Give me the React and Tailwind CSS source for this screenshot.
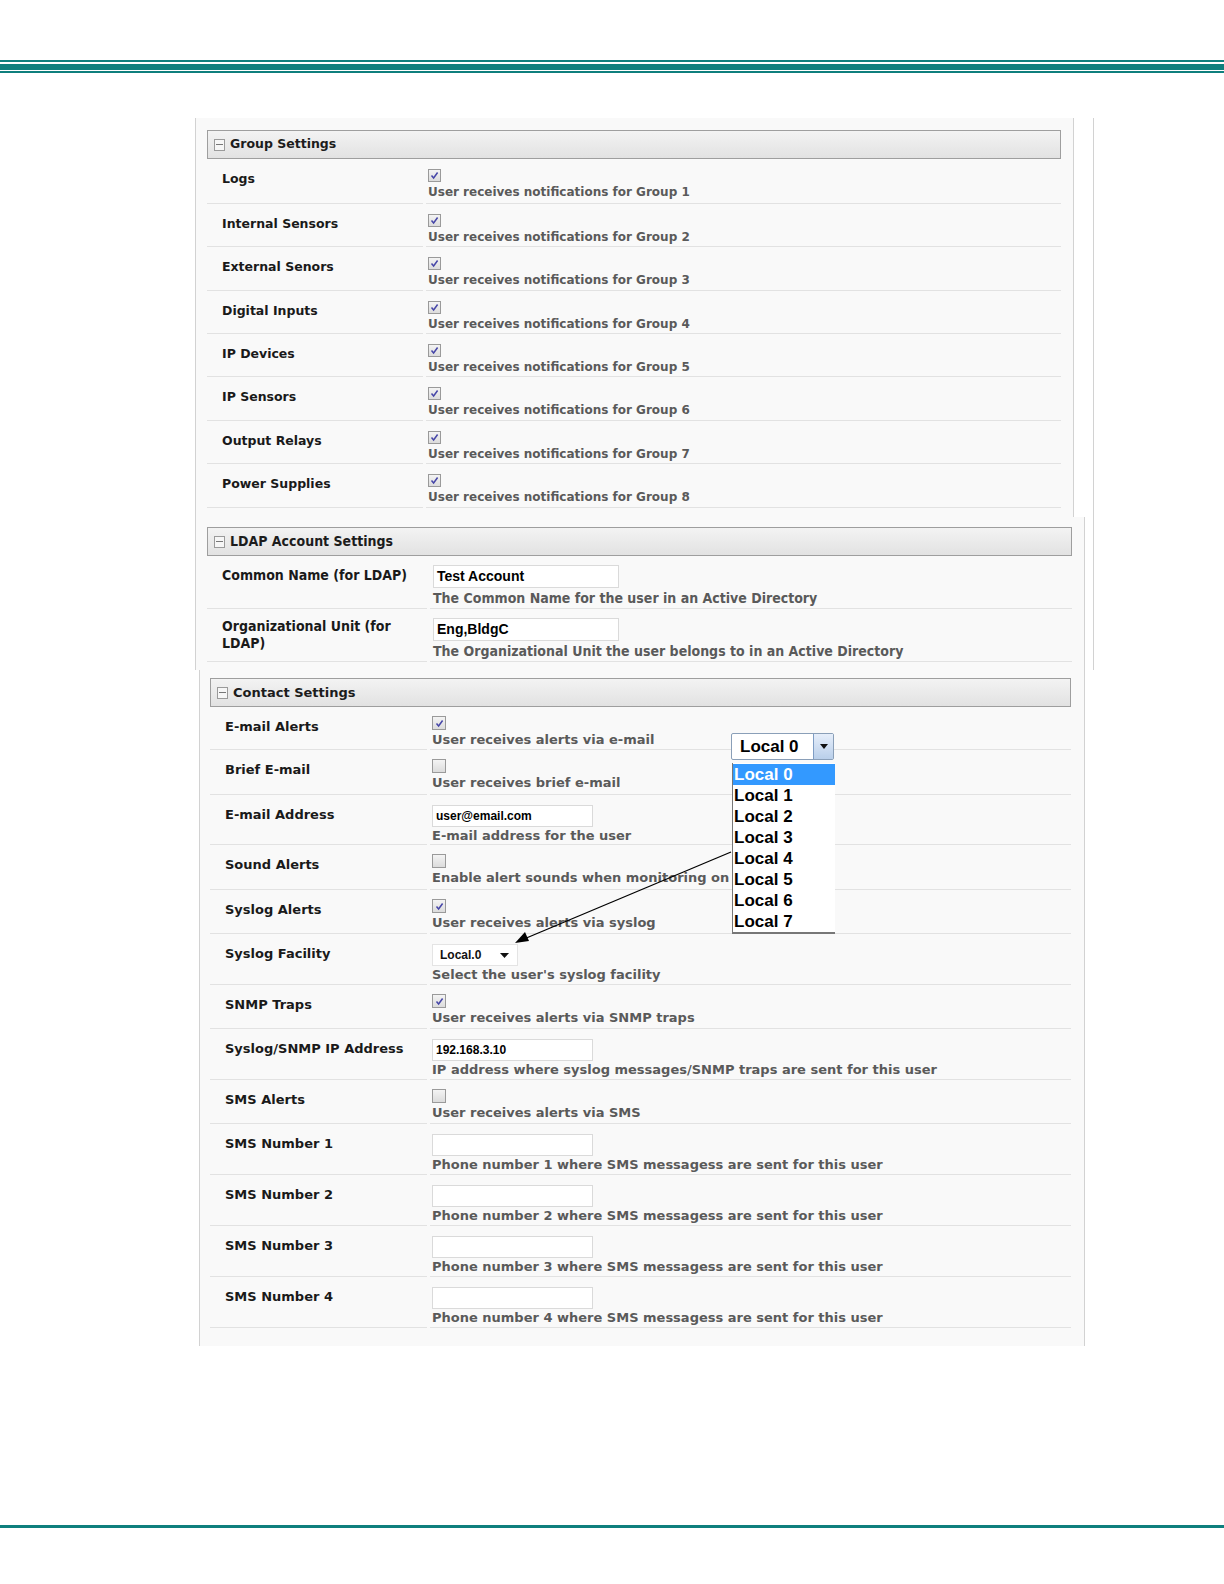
import React from "react";

const verdana = { fontFamily: '"DejaVu Sans", Verdana, sans-serif' };
const condensed = {
  fontFamily: '"DejaVu Sans Condensed", "DejaVu Sans", sans-serif',
  fontStretch: "condensed",
};
const arial = { fontFamily: '"Liberation Sans", Arial, sans-serif' };

const groupRows = [
  ["Logs", 1, 45],
  ["Internal Sensors", 2, 43],
  ["External Senors", 3, 44],
  ["Digital Inputs", 4, 43],
  ["IP Devices", 5, 43],
  ["IP Sensors", 6, 44],
  ["Output Relays", 7, 43],
  ["Power Supplies", 8, 44],
];

const Check = ({ checked, size = 13 }) => (
  <div
    className="border border-[#9a9a9a] bg-gradient-to-b from-[#f4f4f4] to-[#dcdcdc] flex items-center justify-center"
    style={{ width: size, height: size }}
  >
    {checked && (
      <svg width="9" height="9" viewBox="0 0 9 9">
        <path d="M1.5 4.5 L3.6 7 L7.6 1.5" fill="none" stroke="#4646a8" strokeWidth="1.5" />
      </svg>
    )}
  </div>
);

const Header = ({ title, size = "text-[13px]", font = verdana }) => (
  <div className="h-[29px] border border-[#9e9e9e] bg-gradient-to-b from-[#f3f3f3] to-[#e2e2e2] flex items-center pl-[6px]">
    <div className="w-[11px] h-[12px] border border-[#9a9a9a] bg-[#f6f6f6] flex items-center justify-center mr-[5px]">
      <div className="w-[7px] h-px bg-[#777]" />
    </div>
    <span className={`font-bold text-[#1c1c1c] ${size}`} style={font}>
      {title}
    </span>
  </div>
);

// one settings row: label cell + value cell, each with its own bottom rule
const Row = ({ label, h, children, labelW = 217, font = verdana, labelCls = "pt-[11px] text-[13px]" }) => (
  <div className="flex" style={{ height: h }}>
    <div
      className={`border-b border-[#e2e2e2] pl-[15px] font-bold text-[#1a1a1a] leading-[17px] ${labelCls}`}
      style={{ width: labelW, ...font }}
    >
      {label}
    </div>
    <div className="flex-1 ml-[3px] border-b border-[#e2e2e2] pl-[2px]">{children}</div>
  </div>
);

const Desc = ({ children, className = "", font = verdana }) => (
  <div className={`font-bold text-[#5a5a5a] leading-[16px] whitespace-nowrap ${className}`} style={font}>
    {children}
  </div>
);

const TextBox = ({ value, w = 161, h = 22, cls = "text-[12px]" }) => (
  <div
    className={`bg-white border border-[#dadada] flex items-center pl-[3px] font-bold text-black ${cls}`}
    style={{ width: w, height: h, ...arial }}
  >
    {value}
  </div>
);

const CheckRow = ({ label, h, checked, desc }) => (
  <Row label={label} h={h}>
    <div className="pt-[9px]">
      <Check checked={checked} size={14} />
      <Desc className="mt-[2px] text-[13px]">{desc}</Desc>
    </div>
  </Row>
);

const InputRow = ({ label, h, value, desc }) => (
  <Row label={label} h={h}>
    <div className="pt-[10px]">
      <TextBox value={value} />
      <Desc className="mt-px text-[13px]">{desc}</Desc>
    </div>
  </Row>
);

export default function App() {
  const locals = [0, 1, 2, 3, 4, 5, 6, 7];
  return (
    <div className="w-[1224px] h-[1584px] bg-white relative">
      {/* top double rule */}
      <div className="pt-[60px]">
        <div className="h-[2px] bg-[#0f7f7d]" />
        <div className="h-px mt-px" />
        <div className="h-[6px] bg-[#0f7f7d]" />
        <div className="h-px" />
        <div className="h-[2px] bg-[#0f7f7d]" />
      </div>

      <div className="mt-[45px] ml-[195px] w-[899px] border-r border-[#d2d2d2]">
        {/* Group Settings */}
        <div className="w-[879px] h-[399px] bg-[#f9f9f9] border-l border-r border-[#d2d2d2] pt-[12px] pl-[11px] pr-[12px]">
          <Header title="Group Settings" size="text-[12.5px]" />
          {groupRows.map(([label, n, h]) => (
            <Row key={n} label={label} h={h} labelW={216} labelCls="pt-[11px] text-[12.5px]">
              <div className="pt-[10px]">
                <Check checked />
                <Desc className="mt-[2px] text-[12px] leading-[15px]">User receives notifications for Group {n}</Desc>
              </div>
            </Row>
          ))}
        </div>

        {/* LDAP Account Settings */}
        <div className="w-[890px] h-[153px] bg-[#f9f9f9] border-l border-r border-[#d2d2d2] pt-[10px] pl-[11px] pr-[12px]">
          <Header title="LDAP Account Settings" size="text-[14px]" font={condensed} />
          <Row label="Common Name (for LDAP)" h={53} labelW={220} font={condensed} labelCls="pt-[11px] text-[14px]">
            <div className="pt-[9px] pl-px">
              <TextBox value="Test Account" w={186} h={23} cls="text-[14px]" />
              <Desc className="mt-px text-[14px] leading-[18px]" font={condensed}>
                The Common Name for the user in an Active Directory
              </Desc>
            </div>
          </Row>
          <Row label="Organizational Unit (for LDAP)" h={53} labelW={220} font={condensed} labelCls="pt-[9px] text-[14px] pr-[10px]">
            <div className="pt-[9px] pl-px">
              <TextBox value="Eng,BldgC" w={186} h={23} cls="text-[14px]" />
              <Desc className="mt-px text-[14px] leading-[18px]" font={condensed}>
                The Organizational Unit the user belongs to in an Active Directory
              </Desc>
            </div>
          </Row>
        </div>
      </div>

      {/* Contact Settings */}
      <div className="relative ml-[199px] w-[886px] h-[676px] bg-[#f9f9f9] border-l border-r border-[#d2d2d2] pt-[8px] pl-[10px] pr-[13px]">
        <Header title="Contact Settings" />
        <CheckRow label="E-mail Alerts" h={43} checked desc="User receives alerts via e-mail" />
        <CheckRow label="Brief E-mail" h={45} desc="User receives brief e-mail" />
        <InputRow label="E-mail Address" h={50} value="user@email.com" desc="E-mail address for the user" />
        <CheckRow label="Sound Alerts" h={45} desc="Enable alert sounds when monitoring on" />
        <CheckRow label="Syslog Alerts" h={44} checked desc="User receives alerts via syslog" />
        <Row label="Syslog Facility" h={51}>
          <div className="pt-[10px]">
            <div
              className="w-[86px] h-[22px] bg-white border border-[#e4e4e4] flex items-center justify-between pl-[7px] pr-[8px] text-[12px] font-bold text-[#111]"
              style={arial}
            >
              Local.0
              <svg width="9" height="5" viewBox="0 0 9 5">
                <path d="M0 0 L9 0 L4.5 5 Z" fill="#111" />
              </svg>
            </div>
            <Desc className="mt-px text-[13px]">Select the user's syslog facility</Desc>
          </div>
        </Row>
        <CheckRow label="SNMP Traps" h={44} checked desc="User receives alerts via SNMP traps" />
        <InputRow label="Syslog/SNMP IP Address" h={51} value="192.168.3.10" desc="IP address where syslog messages/SNMP traps are sent for this user" />
        <CheckRow label="SMS Alerts" h={44} desc="User receives alerts via SMS" />
        {[1, 2, 3, 4].map((n) => (
          <InputRow
            key={n}
            label={`SMS Number ${n}`}
            h={51}
            value=""
            desc={`Phone number ${n} where SMS messagess are sent for this user`}
          />
        ))}

        {/* open syslog facility dropdown */}
        <div
          className="absolute left-[531px] top-[63px] w-[103px] h-[27px] bg-white border border-[#8a9fb8] rounded-[2px] flex items-center"
          style={arial}
        >
          <span className="pl-[8px] text-[17px] font-bold text-black flex-1">Local 0</span>
          <div className="w-[20px] h-full border-l border-[#7f9dc4] bg-gradient-to-b from-[#e6eefa] to-[#b9cfea] flex items-center justify-center">
            <svg width="8" height="5" viewBox="0 0 8 5">
              <path d="M0 0 L8 0 L4 5 Z" fill="#111" />
            </svg>
          </div>
        </div>
        <div
          className="absolute left-[532px] top-[93px] w-[103px] h-[171px] bg-white border-l border-b-2 border-[#777] flex flex-col pt-px"
          style={arial}
        >
          {locals.map((n) => (
            <div
              key={n}
              className={`h-[21px] leading-[21px] pl-px text-[17px] font-bold ${n === 0 ? "bg-[#3399ff] text-white" : "text-black"}`}
            >
              Local {n}
            </div>
          ))}
        </div>
        <svg className="absolute left-0 top-0 pointer-events-none" width="886" height="400">
          <line x1="531" y1="182" x2="324" y2="269" stroke="#000" strokeWidth="1.3" />
          <path d="M315 273 L325 262 L329 271 Z" fill="#000" />
        </svg>
      </div>

      {/* bottom rule */}
      <div className="mt-[179px] h-[3px] bg-[#0f7f7d]" />
    </div>
  );
}
